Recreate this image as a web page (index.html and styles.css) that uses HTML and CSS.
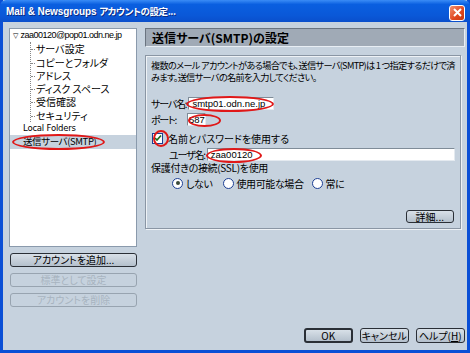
FILE: index.html
```html
<!DOCTYPE html>
<html lang="ja">
<head>
    <meta charset="UTF-8">
    <title>Mail &amp; Newsgroups アカウントの設定</title>
    <link rel="stylesheet" href="styles.css">
</head>
<body>
    <div class="window">
        <!-- Title bar -->
        <div class="titlebar">
            <span class="title">Mail &amp; Newsgroups <span class="title-jp">アカウントの設定...</span></span>
            <span class="close">
                <svg width="9" height="9" viewBox="0 0 9 9"><path d="M1 1 L8 8 M8 1 L1 8" stroke="#fff" stroke-width="2"/></svg>
            </span>
        </div>

        <div class="body">
            <!-- Left side: account tree -->
            <div class="sidebar">
                <div class="tree">
                    <div class="tree-item root"><span class="twisty">&#9661;</span>zaa00120@pop01.odn.ne.jp</div>
                    <div class="children">
                        <div class="tree-item child">サーバ設定</div>
                        <div class="tree-item child">コピーとフォルダ</div>
                        <div class="tree-item child">アドレス</div>
                        <div class="tree-item child">ディスク スペース</div>
                        <div class="tree-item child">受信確認</div>
                        <div class="tree-item child">セキュリティ</div>
                    </div>
                    <div class="tree-item top">Local Folders</div>
                    <div class="tree-item top selected">送信サーバ(SMTP)</div>
                </div>
                <button class="btn side-btn">アカウントを追加...</button>
                <button class="btn side-btn" disabled>標準として設定</button>
                <button class="btn side-btn" disabled>アカウントを削除</button>
            </div>

            <!-- Right side: settings -->
            <div class="main">
                <div class="header">送信サーバ(SMTP)の設定</div>
                <div class="group">
                    <p class="desc">複数のメール アカウントがある場合でも、送信サーバ(SMTP)は 1 つ指定するだけで済<br>みます。送信サーバの名前を入力してください。</p>
                    <div class="row server-row">
                        <span class="label">サーバ名:</span>
                        <span class="field server">smtp01.odn.ne.jp</span>
                    </div>
                    <div class="row port-row">
                        <span class="label port-label">ポート:</span>
                        <span class="field port">587</span>
                    </div>
                    <div class="row check-row">
                        <span class="checkbox">
                            <svg width="8" height="8" viewBox="0 0 8 8"><path d="M1 4 L3 6 L7 1.5" fill="none" stroke="#1c6b1c" stroke-width="1.6"/></svg>
                        </span>
                        <span>名前とパスワードを使用する</span>
                    </div>
                    <div class="row user-row">
                        <span class="label">ユーザ名:</span>
                        <span class="field user">zaa00120</span>
                    </div>
                    <div class="row ssl-label">保護付きの接続(SSL)を使用</div>
                    <div class="row radios">
                        <span class="radio-opt first"><span class="radio checked"></span>しない</span>
                        <span class="radio-opt second"><span class="radio"></span>使用可能な場合</span>
                        <span class="radio-opt"><span class="radio"></span>常に</span>
                    </div>
                    <div class="detail-row">
                        <button class="btn detail-btn">詳細...</button>
                    </div>
                </div>
                <div class="footer">
                    <button class="btn foot-btn default">OK</button>
                    <button class="btn foot-btn">キャンセル</button>
                    <button class="btn foot-btn">ヘルプ(<u>H</u>)</button>
                </div>
            </div>
        </div>

        <!-- Red marker ellipses drawn over the dialog -->
        <span class="mark mark-tree"></span>
        <span class="mark mark-server"></span>
        <span class="mark mark-port"></span>
        <span class="mark mark-check"></span>
        <span class="mark mark-user"></span>
    </div>
</body>
</html>
```

FILE: styles.css
```css
body, html {
    margin: 0;
    padding: 0;
    background: #c6d2de;
    font-family: "Noto Sans CJK JP", "Noto Sans", sans-serif;
    font-size: 10px;
    font-feature-settings: "palt";
    color: #000;
}
.window {
    position: relative;
    width: 470px;
    height: 353px;
    box-sizing: border-box;
    background: #c6d2de;
    border: 3px solid #0a4fd6;
    border-top: none;
    display: flex;
    flex-direction: column;
}
/* Title bar */
.titlebar {
    height: 22px;
    margin: 0 -3px;
    padding: 0 5px 0 6px;
    display: flex;
    align-items: center;
    justify-content: space-between;
    background: linear-gradient(#3a8cf6 0%, #0a5fe0 20%, #0a58d8 70%, #0a4fcc 100%);
    color: #fff;
    border-radius: 6px 6px 0 0;
}
.title {
    font-family: "Liberation Sans", "Noto Sans CJK JP", sans-serif;
    font-weight: bold;
    font-size: 10px;
    letter-spacing: -0.1px;
    text-shadow: 1px 1px 0 #0b2a80;
    white-space: nowrap;
}
.title-jp {
    font-family: "Noto Sans CJK JP", sans-serif;
    font-size: 9.5px;
    letter-spacing: -0.4px;
}
.close {
    width: 16px;
    height: 16px;
    margin-top: 3px;
    box-sizing: border-box;
    border: 1px solid #fff;
    border-radius: 3px;
    background: linear-gradient(135deg, #f09070, #e0461e 60%, #c83810);
    display: flex;
    align-items: center;
    justify-content: center;
}
.body {
    flex: 1;
    display: flex;
    padding: 6px 5px 7px 6px;
    gap: 8px;
}
/* Sidebar */
.sidebar {
    width: 129px;
    display: flex;
    flex-direction: column;
}
.tree {
    height: 219px;
    background: #fff;
    border: 1px solid #8a9aac;
    box-sizing: border-box;
    margin-bottom: 6px;
}
.tree-item {
    height: 13.3px;
    line-height: 13.3px;
    white-space: nowrap;
    font-size: 10px;
}
.root {
    padding-left: 3px;
    font-family: "Liberation Sans", sans-serif;
    font-size: 9px;
    letter-spacing: -0.5px;
}
.twisty {
    font-family: "DejaVu Sans", sans-serif;
    font-size: 7px;
    margin-right: 2px;
    letter-spacing: 0;
}
.children {
    margin-left: 20px;
    border-left: 1px dotted #888;
}
.child {
    position: relative;
    padding-left: 5px;
}
.child::before {
    content: "";
    position: absolute;
    left: 0;
    top: 7px;
    width: 4px;
    border-top: 1px dotted #888;
}
.top {
    padding-left: 13px;
    font-family: "DejaVu Sans", "Noto Sans CJK JP", sans-serif;
    font-size: 8.5px;
    letter-spacing: -0.2px;
}
.selected {
    background: #c6d2de;
    font-family: "Noto Sans CJK JP", sans-serif;
    font-size: 9.5px;
    letter-spacing: -0.4px;
}
.btn {
    font-family: "Noto Sans CJK JP", sans-serif;
    font-size: 10px;
    font-feature-settings: "palt";
    height: 14px;
    padding: 0;
    line-height: 12px;
    background: linear-gradient(#d8e0e8, #b4c0cc);
    border: 1px solid #2a2f36;
    border-radius: 3px;
    color: #000;
    white-space: nowrap;
}
.btn:disabled {
    color: #a8b4c0;
    border-color: #98a4b0;
    background: #c6d2de;
}
.side-btn {
    width: 127px;
    margin-left: 1px;
    margin-bottom: 6px;
}
/* Main area */
.main {
    flex: 1;
    display: flex;
    flex-direction: column;
}
.header {
    height: 19px;
    box-sizing: border-box;
    background: #a0aab6;
    border: 1px solid #6a7480;
    border-right-color: #e8eef4;
    border-bottom-color: #e8eef4;
    padding-left: 6px;
    font-weight: bold;
    font-size: 12px;
    line-height: 17px;
}
.group {
    margin-top: 8px;
    height: 174px;
    box-sizing: border-box;
    border: 1px solid #8a96a4;
    box-shadow: inset 1px 1px 0 #eef2f6, 1px 1px 0 #eef2f6;
    margin-right: 4px;
    padding: 3px 5px 0 5px;
    display: flex;
    flex-direction: column;
}
.desc {
    margin: 0 0 12px 0;
    font-size: 9.2px;
    line-height: 12px;
    letter-spacing: -0.7px;
    white-space: nowrap;
}
.row {
    display: flex;
    align-items: center;
    height: 16px;
    white-space: nowrap;
}
.label {
    letter-spacing: -1.2px;
    margin-right: 2px;
}
.field {
    background: #fff;
    height: 13px;
    box-sizing: border-box;
    border: 1px solid #7f8c98;
    border-right-color: #e4eaf0;
    border-bottom-color: #e4eaf0;
    font-family: "Liberation Sans", sans-serif;
    font-size: 9.5px;
    line-height: 11px;
    padding-left: 3px;
}
.server {
    width: 86px;
}
.port-label {
    width: 34px;
}
.port {
    width: 19px;
    padding-left: 1px;
}
.check-row {
    margin-top: 2px;
    height: 18px;
}
.checkbox {
    width: 11px;
    height: 11px;
    box-sizing: border-box;
    border: 1px solid #1c3f94;
    background: #fff;
    margin: 0 5px 0 1px;
    display: flex;
    align-items: center;
    justify-content: center;
}
.user-row {
    height: 14px;
    padding-left: 18px;
}
.user {
    flex: 1;
}
.ssl-label {
    height: 12px;
    letter-spacing: -0.3px;
}
.radios {
    padding-left: 21px;
    height: 20px;
    letter-spacing: -0.4px;
}
.radio-opt {
    display: flex;
    align-items: center;
}
.radio-opt.first {
    margin-right: 10px;
}
.radio-opt.second {
    margin-right: 8px;
}
.radio {
    width: 11px;
    height: 11px;
    box-sizing: border-box;
    border: 1px solid #1c3f94;
    border-radius: 50%;
    background: #fff;
    margin-right: 3px;
    position: relative;
}
.radio.checked::after {
    content: "";
    position: absolute;
    left: 2.5px;
    top: 2.5px;
    width: 4px;
    height: 4px;
    border-radius: 50%;
    background: #3a4a3a;
}
.detail-row {
    display: flex;
    justify-content: flex-end;
    margin-top: auto;
    margin-bottom: 5px;
}
.detail-btn {
    width: 48px;
    height: 13px;
    margin-right: 1px;
}
.footer {
    margin-top: auto;
    display: flex;
    justify-content: flex-end;
    gap: 7px;
}
.foot-btn {
    width: 49px;
    height: 15px;
}
.foot-btn.default {
    border-width: 2px;
    line-height: 11px;
}
/* Red marker ellipses */
.mark {
    position: absolute;
    border: 2px solid #e01818;
    border-radius: 50%;
    box-sizing: border-box;
}
.mark-tree {
    left: 9px;
    top: 134px;
    width: 93px;
    height: 16px;
}
.mark-server {
    left: 183px;
    top: 96px;
    width: 88px;
    height: 16px;
}
.mark-port {
    left: 185px;
    top: 114px;
    width: 33px;
    height: 13px;
}
.mark-check {
    left: 150px;
    top: 130px;
    width: 16px;
    height: 17px;
}
.mark-user {
    left: 203px;
    top: 148px;
    width: 56px;
    height: 15px;
}
```
